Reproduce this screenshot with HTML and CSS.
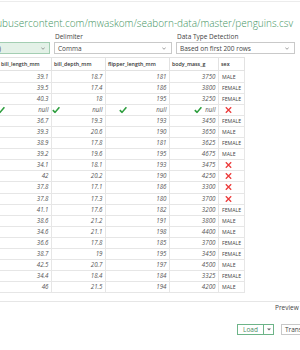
FILE: index.html
```html
<!DOCTYPE html>
<html lang="en">
<head>
    <meta charset="UTF-8">
    <meta name="viewport" content="width=device-width, initial-scale=1.0">
    <title>penguins.csv</title>
    <link rel="stylesheet" href="styles.css">
</head>
<body>
    <div class="topbar"></div>

    <h1 class="title"><span>https://raw.githubusercontent.com/mwaskom/seaborn-data/master/penguins.csv</span></h1>

    <!-- File options -->
    <div class="options">
        <div class="field field-origin">
            <label>File Origin</label>
            <div class="select select-active">
                <span class="select-text">65001: Unicode (UTF-8)</span>
                <svg class="chevron" width="4" height="3" viewBox="0 0 4 3"><path d="M0.3 0.5 L2 2.3 L3.7 0.5" fill="none" stroke="#777" stroke-width="0.7"/></svg>
            </div>
        </div>
        <div class="field field-delim">
            <label>Delimiter</label>
            <div class="select">
                <span>Comma</span>
                <svg class="chevron" width="4" height="3" viewBox="0 0 4 3"><path d="M0.3 0.5 L2 2.3 L3.7 0.5" fill="none" stroke="#777" stroke-width="0.7"/></svg>
            </div>
        </div>
        <div class="field field-detect">
            <label>Data Type Detection</label>
            <div class="select">
                <span>Based on first 200 rows</span>
                <svg class="chevron" width="4" height="3" viewBox="0 0 4 3"><path d="M0.3 0.5 L2 2.3 L3.7 0.5" fill="none" stroke="#777" stroke-width="0.7"/></svg>
            </div>
        </div>
    </div>

    <!-- Preview table -->
    <table class="preview">
        <colgroup>
            <col style="width: 53px">
            <col style="width: 54px">
            <col style="width: 64px">
            <col style="width: 49px">
            <col style="width: 26px">
        </colgroup>
        <thead>
            <tr>
                <th>bill_length_mm</th>
                <th>bill_depth_mm</th>
                <th>flipper_length_mm</th>
                <th>body_mass_g</th>
                <th>sex</th>
            </tr>
        </thead>
        <tbody id="rows"></tbody>
    </table>

    <div class="divider"></div>
    <div class="info">Preview downloaded on Monday, March 9, 2020</div>

    <div class="actions">
        <div class="split">
            <div class="btn-main">Load</div>
            <div class="btn-drop">
                <svg width="4" height="3" viewBox="0 0 4 3"><path d="M0 0.4 L4 0.4 L2 2.6 Z" fill="#666"/></svg>
            </div>
        </div>
        <div class="btn">Transform Data</div>
    </div>

    <script>
        const dados = [
            ['39.1', '18.7', '181', '3750', 'MALE'],
            ['39.5', '17.4', '186', '3800', 'FEMALE'],
            ['40.3', '18', '195', '3250', 'FEMALE'],
            ['null', 'null', 'null', 'null', ''],
            ['36.7', '19.3', '193', '3450', 'FEMALE'],
            ['39.3', '20.6', '190', '3650', 'MALE'],
            ['38.9', '17.8', '181', '3625', 'FEMALE'],
            ['39.2', '19.6', '195', '4675', 'MALE'],
            ['34.1', '18.1', '193', '3475', ''],
            ['42', '20.2', '190', '4250', ''],
            ['37.8', '17.1', '186', '3300', ''],
            ['37.8', '17.3', '180', '3700', ''],
            ['41.1', '17.6', '182', '3200', 'FEMALE'],
            ['38.6', '21.2', '191', '3800', 'MALE'],
            ['34.6', '21.1', '198', '4400', 'MALE'],
            ['36.6', '17.8', '185', '3700', 'FEMALE'],
            ['38.7', '19', '195', '3450', 'FEMALE'],
            ['42.5', '20.7', '197', '4500', 'MALE'],
            ['34.4', '18.4', '184', '3325', 'FEMALE'],
            ['46', '21.5', '194', '4200', 'MALE']
        ];

        const check = '<svg class="mark" width="8" height="7" viewBox="0 0 8 7"><path d="M0.8 3.6 L3 5.9 L7.4 0.8" fill="none" stroke="#2e9e3e" stroke-width="1.6"/></svg>';
        const cross = '<svg class="mark mark-x" width="7" height="7" viewBox="0 0 7 7"><path d="M0.8 0.8 L6.2 6.2 M6.2 0.8 L0.8 6.2" fill="none" stroke="#ec3b3b" stroke-width="1.3"/></svg>';

        const tbody = document.getElementById('rows');
        dados.forEach(linha => {
            const tr = document.createElement('tr');
            linha.forEach((valor, i) => {
                const td = document.createElement('td');
                if (i === 4) {
                    td.className = 'sex';
                    td.innerHTML = valor === '' ? cross : valor;
                } else {
                    td.textContent = valor;
                    if (valor === 'null') {
                        td.insertAdjacentHTML('afterbegin', check.replace('class="mark"', 'class="mark mark-' + i + '"'));
                    }
                }
                tr.appendChild(td);
            });
            tbody.appendChild(tr);
        });
    </script>
</body>
</html>
```

FILE: styles.css
```css
* {
    box-sizing: border-box;
}

html, body {
    overflow: hidden;
}

body {
    margin: 0;
    width: 300px;
    height: 350px;
    background-color: #fff;
    font-family: "Open Sans", "Noto Sans", sans-serif;
    color: #444;
}

.topbar {
    height: 2px;
    border-bottom: 1px solid #ececec;
}

.title {
    display: flex;
    justify-content: flex-end;
    width: 293px;
    margin: 13.5px 0 0;
    font-size: 10px;
    line-height: 14px;
    font-weight: 300;
    color: #449563;
    white-space: nowrap;
}

.title span {
    flex-shrink: 0;
}

.options {
    display: flex;
    gap: 4px;
    margin: 3.3px 0 0 -80px;
}

.field {
    display: flex;
    flex-direction: column;
    gap: 1.2px;
    flex-shrink: 0;
}

.field label {
    height: 8px;
    padding-left: 1px;
    font-size: 6.5px;
    line-height: 8px;
    color: #444;
    white-space: nowrap;
}

.field-origin {
    width: 130px;
}

.field-origin label {
    visibility: hidden;
}

.field-delim {
    width: 118px;
}

.field-detect {
    width: 119px;
}

.select {
    height: 12.5px;
    border: 1px solid #c9c9c9;
    display: flex;
    align-items: center;
    justify-content: space-between;
    padding: 0 5px 0 3px;
    font-size: 6.5px;
    color: #444;
    white-space: nowrap;
    overflow: hidden;
}

.select-active {
    background-color: #e3f1e7;
    border-color: #a3ceb2;
    justify-content: flex-end;
    padding-right: 4px;
}

.select-active .select-text {
    margin-right: 40px;
    flex-shrink: 0;
}

.chevron {
    flex-shrink: 0;
}

.preview {
    border-collapse: collapse;
    table-layout: fixed;
    width: 246px;
    margin: 2.5px 0 0 -2px;
}

.preview th {
    height: 13.5px;
    padding: 0 2px;
    border: 1px solid #e2e2e2;
    font-size: 5.3px;
    font-weight: 600;
    text-align: left;
    color: #333;
    white-space: nowrap;
    overflow: hidden;
}

.preview td {
    position: relative;
    height: 11.1px;
    padding: 0 2.5px 0 2px;
    border: 1px solid #e6e6e6;
    font-size: 6.2px;
    line-height: 8px;
    font-style: italic;
    text-align: right;
    color: #555;
    white-space: nowrap;
}

.preview td.sex {
    font-style: normal;
    text-align: left;
    padding-left: 3px;
    font-size: 5.2px;
    color: #444;
}

.mark {
    position: absolute;
    top: 50%;
    transform: translateY(-50%);
}

.mark-0 {
    left: -2px;
}

.mark-1 {
    left: 0;
}

.mark-2 {
    left: 13px;
}

.mark-3 {
    left: 24px;
}

.mark-x {
    left: 6px;
}

.divider {
    margin-top: 7.5px;
    border-top: 1px solid #e6e6e6;
}

.info {
    margin-top: 2px;
    padding-left: 275px;
    font-size: 6.5px;
    line-height: 8px;
    color: #444;
    white-space: nowrap;
}

.actions {
    display: flex;
    gap: 7px;
    margin-top: 12px;
    padding-left: 237px;
}

.split {
    display: flex;
    height: 11px;
    border: 1px solid #6db488;
    flex-shrink: 0;
}

.btn-main {
    width: 25px;
    font-size: 6.5px;
    line-height: 9px;
    text-align: center;
    color: #4b8a63;
}

.btn-drop {
    width: 10px;
    border-left: 1px solid #6db488;
    display: flex;
    align-items: center;
    justify-content: center;
}

.btn {
    flex-shrink: 0;
    width: 60px;
    height: 11px;
    padding-left: 3px;
    border: 1px solid #c8c8c8;
    font-size: 6.5px;
    line-height: 9px;
    color: #444;
    white-space: nowrap;
}
```
